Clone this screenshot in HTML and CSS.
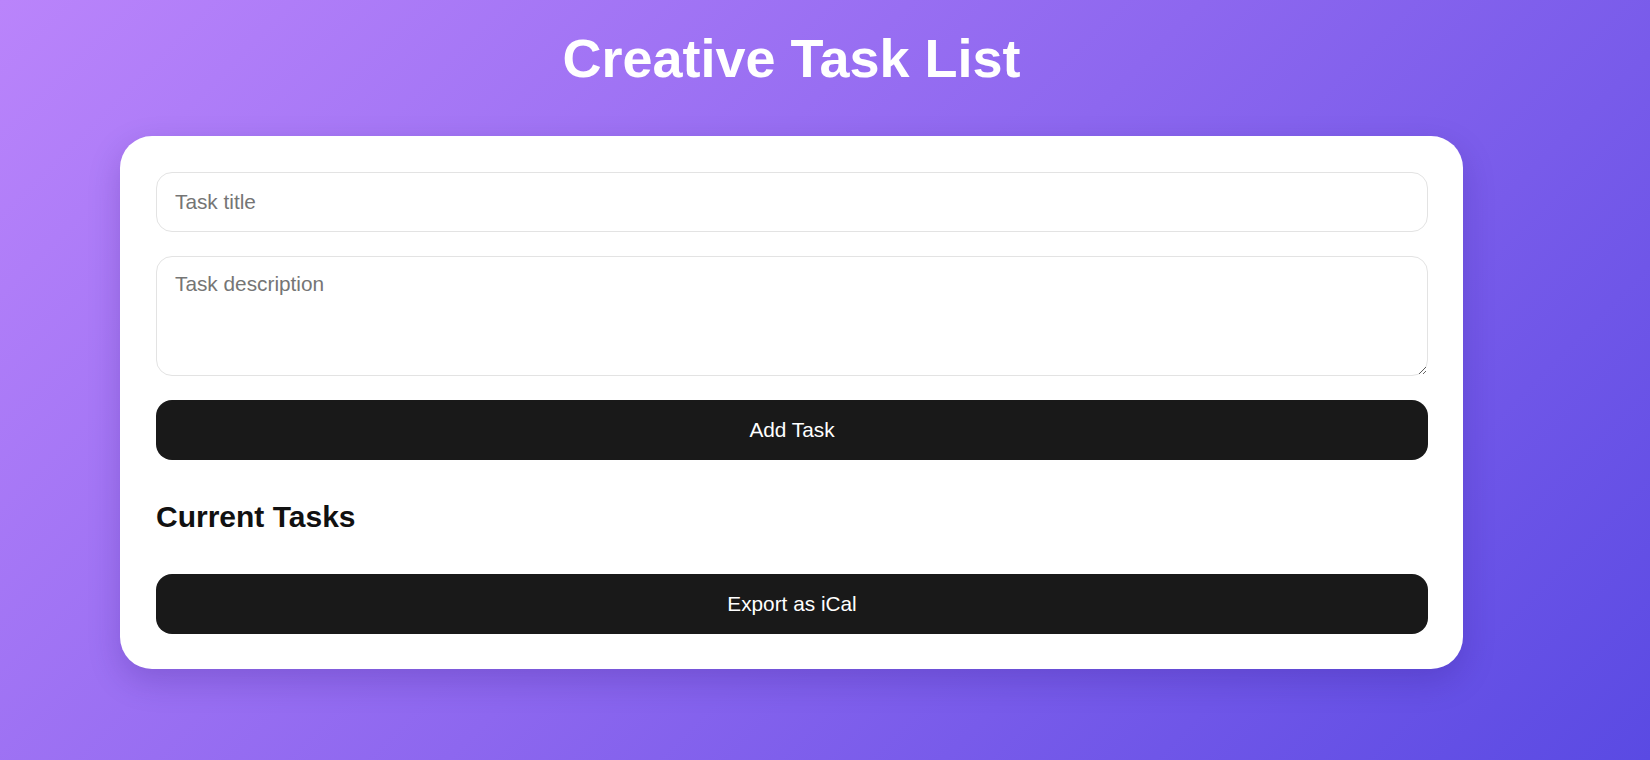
FILE: index.html
```html
<!DOCTYPE html>
<html lang="en">
<head>
<meta charset="UTF-8">
<title>Creative Task List</title>
<link rel="stylesheet" href="styles.css">
</head>
<body>
  <main class="app">
    <h1 class="app-title">Creative Task List</h1>
    <section class="card">
      <form class="task-form" onsubmit="return false;">
        <input class="field field-input" type="text" placeholder="Task title">
        <textarea class="field field-area" placeholder="Task description"></textarea>
        <button class="btn" type="submit">Add Task</button>
      </form>
      <h2 class="section-title">Current Tasks</h2>
      <ul class="task-list"></ul>
      <button class="btn" type="button">Export as iCal</button>
    </section>
  </main>
</body>
</html>
```

FILE: styles.css
```css
* {
  box-sizing: border-box;
}

html, body {
  margin: 0;
  height: 100%;
}

body {
  font-family: "Liberation Sans", Arial, sans-serif;
  background: linear-gradient(135deg, #ba84fb 0%, #8d67ef 50%, #5a4ae3 100%);
  min-height: 760px;
  padding: 27px 187px 0 120px;
  overflow: hidden;
}

.app {
  display: flex;
  flex-direction: column;
}

.app-title {
  margin: 0 0 47px;
  text-align: center;
  color: #ffffff;
  font-size: 54px;
  font-weight: 700;
  line-height: 62px;
}

.card {
  background: #ffffff;
  border-radius: 32px;
  padding: 36px 35px 35px 36px;
  box-shadow: 0 12px 32px rgba(40, 20, 120, 0.22);
  display: flex;
  flex-direction: column;
}

.task-form {
  display: flex;
  flex-direction: column;
  gap: 24px;
}

.field {
  display: block;
  width: 100%;
  font-family: "Liberation Sans", Arial, sans-serif;
  font-size: 20.8px;
  line-height: 24px;
  color: #222;
  border: 1px solid #e3e3e3;
  border-radius: 16px;
  padding: 17px 18px;
  background: #fff;
  outline: none;
}

.field::placeholder {
  color: #757575;
}

.field-input {
  height: 60px;
}

.field-area {
  height: 120px;
  padding: 15px 18px;
  resize: vertical;
}

.btn {
  display: block;
  width: 100%;
  font-family: "Liberation Sans", Arial, sans-serif;
  font-size: 20.8px;
  line-height: 24px;
  padding: 18px;
  border: none;
  border-radius: 16px;
  background: #191919;
  color: #ffffff;
  cursor: pointer;
}

.section-title {
  margin: 40px 0 0;
  font-size: 30px;
  line-height: 34px;
  font-weight: 700;
  color: #111;
}

.task-list {
  list-style: none;
  margin: 0;
  padding: 0;
  min-height: 40px;
}
```
